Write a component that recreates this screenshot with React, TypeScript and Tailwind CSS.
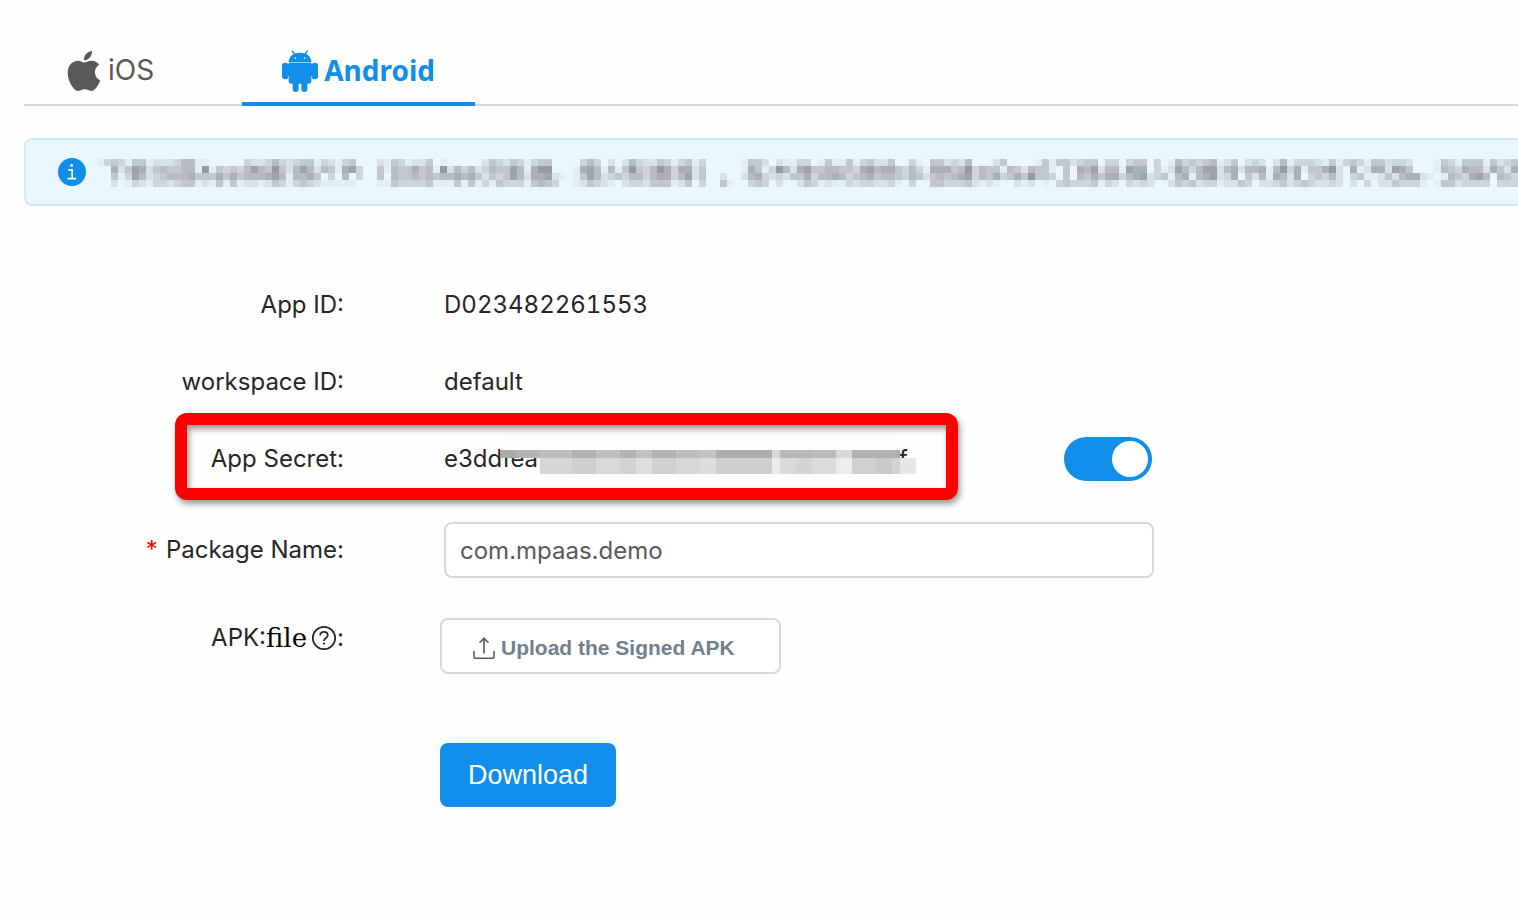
import { useState } from "react";
import type { ReactNode } from "react";
import { SiApple } from "react-icons/si";

// Darkness of each 7px cell of the masked notice, 0 (clear) to 9 (darkest)
const NOTICE_MASK = [
  "1343144122235511000003223532344132134000" +
    "21431224010000024324313440000353020253224313413000" +
    "001442021133014114134224003104423250002400001414423440330" +
    "34403015343451240232025133321413431442332000143144414234",
  "0062476245445518143435754842575254167300" +
    "41544645182535235447516880001675151484358636624000" +
    "001641385267445544367566435316664583544154254410406572551" +
    "76603127535772562556158361446820612662764000154365526426",
  "0041375234555644464645556751556403050300" +
    "40544545455656424347526672101475234355356635724002" +
    "002563232446355653456455435424545673546346484430405464663" +
    "56723415615672360425165260343520341124256621015436750543",
  "0020132133234412141412212431343211111000" +
    "11433334111414131433314543001243210233244412403004" +
    "100343020024312113233223103004433342121002120103433341320" +
    "32320024342331224302234234322320203022433310144233330333",
];

const MASK_SHADES = [
  "#eaf6fd",
  "#e3eef4",
  "#d9e1e8",
  "#cdd4da",
  "#c2c7ce",
  "#b7bcc2",
  "#abb0b6",
  "#9fa3ab",
  "#959ba0",
  "#8c9294",
];

// x, width, upper band, lower band
const SECRET_MASK = [
  { x: 0, w: 16, upper: "#a9a9a9" },
  { x: 16, w: 24, upper: "#b3b3b3" },
  { x: 40, w: 32, upper: "#bdbdbd", lower: "#d6d6d6" },
  { x: 72, w: 24, upper: "#b1b1b1", lower: "#cfcfcf" },
  { x: 96, w: 24, upper: "#bebebe", lower: "#d9d9d9" },
  { x: 120, w: 16, upper: "#b3b3b3", lower: "#d2d2d2" },
  { x: 136, w: 16, upper: "#c1c1c1", lower: "#dedede" },
  { x: 152, w: 24, upper: "#b2b2b2", lower: "#d0d0d0" },
  { x: 176, w: 24, upper: "#bdbdbd", lower: "#d8d8d8" },
  { x: 200, w: 16, upper: "#c3c3c3", lower: "#dddddd" },
  { x: 216, w: 56, upper: "#adadad", lower: "#cecece" },
  { x: 272, w: 8, upper: "#d8d8d8", lower: "#ececec" },
  { x: 280, w: 16, upper: "#b8b8b8", lower: "#dadada" },
  { x: 296, w: 16, upper: "#b8b8b8", lower: "#d4d4d4" },
  { x: 312, w: 24, upper: "#bbbbbb", lower: "#dcdcdc" },
  { x: 336, w: 16, upper: "#d8d8d8", lower: "#ededed" },
  { x: 352, w: 24, upper: "#b0b0b0", lower: "#d0d0d0" },
  { x: 376, w: 16, upper: "#b0b0b0", lower: "#c9c9c9" },
  { x: 392, w: 8, upper: "#b0b0b0", lower: "#d2d2d2" },
  { x: 400, w: 16, lower: "#e7e7e7" },
];

function NoticeMask() {
  return (
    <svg
      width={1421}
      height={28}
      className="mt-0.5 shrink-0"
      shapeRendering="crispEdges"
      aria-hidden="true"
    >
      {NOTICE_MASK.map((row, y) =>
        row.split("").map((level, x) =>
          level === "0" ? null : (
            <rect
              key={`${x}-${y}`}
              x={x * 7}
              y={y * 7}
              width={7}
              height={7}
              fill={MASK_SHADES[Number(level)]}
            />
          )
        )
      )}
    </svg>
  );
}

function SecretMask() {
  return (
    <svg
      width={416}
      height={40}
      className="absolute left-14 top-0"
      shapeRendering="crispEdges"
      aria-hidden="true"
    >
      <rect width={400} height={16} fill="#fdfdfd" />
      {SECRET_MASK.map((cell) => (
        <g key={cell.x}>
          {cell.upper && <rect x={cell.x} y={16} width={cell.w} height={8} fill={cell.upper} />}
          {cell.lower && <rect x={cell.x} y={24} width={cell.w} height={16} fill={cell.lower} />}
        </g>
      ))}
    </svg>
  );
}

function InfoIcon() {
  return (
    <svg width={28} height={28} viewBox="0 0 28 28" className="shrink-0" aria-hidden="true">
      <circle cx={14} cy={14} r={14} fill="#108ee9" />
      <circle cx={13.6} cy={7.4} r={1.4} fill="#fff" />
      <path d="M10.2 11.8h4v8.9M9.6 20.7h8.6" fill="none" stroke="#fff" strokeWidth={1.7} />
    </svg>
  );
}

function AndroidIcon() {
  return (
    <svg width={36} height={42} viewBox="0 0 108 126" fill="currentColor" aria-hidden="true">
      <path d="M31 3l9 13M76 3l-9 13" stroke="currentColor" strokeWidth={4} strokeLinecap="round" />
      <path d="M20 36.5C20 18 35 8 54 8s34 10 34 28.5z" />
      <circle cx={40} cy={24} r={2.5} fill="#fefefe" />
      <circle cx={68} cy={24} r={2.5} fill="#fefefe" />
      <path d="M20 38h68v54a9 9 0 0 1-9 9H29a9 9 0 0 1-9-9z" />
      <rect x={0} y={38} width={19} height={50} rx={9} />
      <rect x={89} y={38} width={19} height={50} rx={9} />
      <path d="M12 42h10v36H17zM86 42h10l-5 36h-5z" />
      <rect x={32} y={90} width={18} height={36} rx={9} />
      <rect x={58} y={90} width={18} height={36} rx={9} />
    </svg>
  );
}

function UploadIcon() {
  return (
    <svg
      width={24}
      height={24}
      viewBox="0 0 24 24"
      fill="none"
      stroke="#595959"
      strokeWidth={1.6}
      strokeLinecap="round"
      strokeLinejoin="round"
      aria-hidden="true"
    >
      <path d="M12 17V2.5M8 6.2l4-4 4 4" />
      <path d="M2 15.5v5.7a1 1 0 0 0 1 1h18a1 1 0 0 0 1-1v-5.7" />
    </svg>
  );
}

function HelpIcon() {
  return (
    <svg
      width={26}
      height={26}
      viewBox="0 0 26 26"
      className="ml-1"
      fill="none"
      stroke="currentColor"
      strokeWidth={1.7}
      aria-hidden="true"
    >
      <circle cx={13} cy={13} r={11.2} />
      <path d="M9.2 10.6c0-2.3 1.7-3.7 3.8-3.7s3.8 1.4 3.8 3.4c0 2.7-3.8 2.8-3.8 5.6" />
      <circle cx={13} cy={18.6} r={1.1} fill="currentColor" stroke="none" />
    </svg>
  );
}

function Row({ label, children }: { label: ReactNode; children: ReactNode }) {
  return (
    <div className="relative flex h-14 items-center gap-24">
      <div className="flex w-80 shrink-0 justify-end whitespace-nowrap">{label}</div>
      <div className="flex min-w-0 flex-1 items-center">{children}</div>
    </div>
  );
}

export default function App() {
  const [platform, setPlatform] = useState("android");
  const [enabled, setEnabled] = useState(true);
  const [packageName, setPackageName] = useState("com.mpaas.demo");

  return (
    <main className="min-h-screen overflow-hidden bg-[#fefefe] pb-28 pl-6 pt-10 font-['Inter',sans-serif] text-2xl text-[#262626]">
      <div role="tablist" className="flex gap-12 border-b-2 border-[#d9d9d9]">
        <button
          type="button"
          role="tab"
          aria-selected={platform === "ios"}
          onClick={() => setPlatform("ios")}
          className="-mb-0.5 flex h-[66px] items-center gap-1 border-b-4 border-transparent px-10 text-[28px] text-[#595959]"
        >
          <SiApple size={40} />
          iOS
        </button>
        <button
          type="button"
          role="tab"
          aria-selected={platform === "android"}
          onClick={() => setPlatform("android")}
          className="-mb-0.5 flex h-[66px] items-center gap-1.5 border-b-4 border-[#108ee9] px-10 font-['Noto_Sans',sans-serif] text-[28px] font-bold text-[#108ee9]"
        >
          <AndroidIcon />
          Android
        </button>
      </div>

      <div
        role="note"
        className="mt-8 flex h-[68px] items-center gap-[11px] overflow-hidden rounded-l-lg border-2 border-r-0 border-[#d2eafb] bg-[#eaf6fd] pl-8"
      >
        <InfoIcon />
        <NoticeMask />
      </div>

      <form className="mt-[71px]" onSubmit={(e) => e.preventDefault()}>
        <div className="flex flex-col gap-[21px]">
          <Row label="App ID:">
            <span className="ml-1 tabular-nums">D023482261553</span>
          </Row>
          <Row label="workspace ID:">
            <span className="ml-1">default</span>
          </Row>
          <Row label={<label htmlFor="secret">App Secret:</label>}>
            <div className="ml-1 flex w-full max-w-[708px] items-center justify-between">
              <span className="relative flex h-[50px] w-[464px] items-center justify-between">
                <span>e3ddfea</span>
                <span>f</span>
                <SecretMask />
              </span>
              <input
                id="secret"
                type="checkbox"
                role="switch"
                checked={enabled}
                onChange={(e) => setEnabled(e.target.checked)}
                className="flex h-11 w-[88px] appearance-none items-center rounded-full bg-[#bfbfbf] p-1 before:size-9 before:rounded-full before:bg-white checked:justify-end checked:bg-[#108ee9]"
              />
            </div>
            {/* Highlight around the secret */}
            <div className="pointer-events-none absolute -bottom-[13px] -top-[18px] left-[151px] w-[783px] rounded-xl border-12 border-[#ff0000] drop-shadow-[2px_4px_3px_rgba(0,0,0,0.4)]" />
          </Row>
        </div>

        <div className="mt-[35px] flex flex-col gap-10">
          <Row
            label={
              <label htmlFor="package">
                <span className="mr-2 text-[#ff0000]">*</span>
                Package Name:
              </label>
            }
          >
            <input
              id="package"
              type="text"
              value={packageName}
              onChange={(e) => setPackageName(e.target.value)}
              className="ml-1 h-14 w-full max-w-[710px] rounded-lg border-2 border-[#d9d9d9] bg-white px-3.5 text-[#595959] outline-none"
            />
          </Row>
          <Row
            label={
              <span className="flex items-center pb-4">
                APK:
                <span className="font-['DejaVu_Serif',serif] text-[26px] text-black">file</span>
                <HelpIcon />:
              </span>
            }
          >
            <button
              type="button"
              className="flex h-14 w-[341px] items-center gap-[5px] rounded-lg border-2 border-[#d9d9d9] bg-white pl-[30px] pt-1 font-['Liberation_Sans',sans-serif] text-[21px] font-bold text-[#708090]"
            >
              <UploadIcon />
              Upload the Signed APK
            </button>
          </Row>
        </div>

        <button
          type="submit"
          className="ml-[416px] mt-[69px] h-16 rounded-lg bg-[#108ee9] px-7 pt-0.5 font-['Liberation_Sans',sans-serif] text-[27px] text-white"
        >
          Download
        </button>
      </form>
    </main>
  );
}
